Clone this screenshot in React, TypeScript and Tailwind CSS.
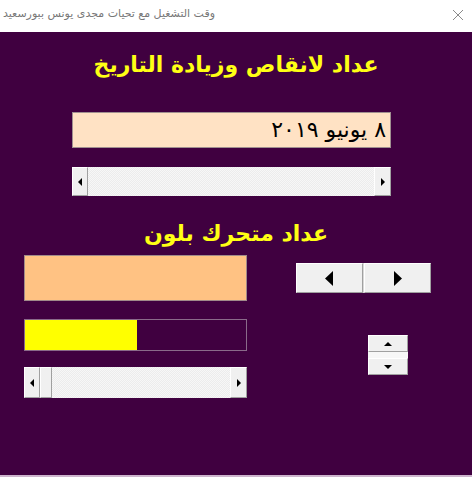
import React from "react";

const Tri = ({ dir, big }: { dir: "left" | "right" | "up" | "down"; big?: boolean }) => {
  if (big) {
    return (
      <svg width="9" height="15" viewBox="0 0 9 15">
        <polygon points={dir === "left" ? "8,0 8,15 0,7.5" : "1,0 1,15 9,7.5"} fill="#000" />
      </svg>
    );
  }
  const vertical = dir === "up" || dir === "down";
  const pts = {
    left: "5,0 5,8 1,4",
    right: "1,0 1,8 5,4",
    up: "0,5 8,5 4,1",
    down: "0,1 8,1 4,5",
  }[dir];
  return (
    <svg width={vertical ? 8 : 6} height={vertical ? 6 : 8} viewBox={vertical ? "0 0 8 6" : "0 0 6 8"}>
      <polygon points={pts} fill="#000" />
    </svg>
  );
};

const bevel = "bg-[#f0f0f0] border-t border-l border-t-[#ffffff] border-l-[#ffffff] border-b border-r border-b-[#a0a0a0] border-r-[#a0a0a0] flex items-center justify-center";

const ScrollBar = ({ className, thumb }: { className: string; thumb?: boolean }) => (
  <div className={`flex bg-[#f4f4f4] ${className}`}>
    <div className={`${bevel} w-[16px]`}>
      <Tri dir="left" />
    </div>
    {thumb && <div className={`${bevel} w-[12px]`} />}
    <div className="flex-1 bg-[repeating-conic-gradient(#f7f7f7_0_25%,#ececec_0_50%)] bg-[length:2px_2px]" />
    <div className={`${bevel} w-[17px]`}>
      <Tri dir="right" />
    </div>
  </div>
);

export default function App() {
  return (
    <div className="w-[472px] h-[477px] flex flex-col font-['DejaVu_Sans',sans-serif] overflow-hidden">
      <div className="h-[32px] bg-white flex items-center justify-between pl-[3px] pr-[8px]">
        <span dir="rtl" className="text-[11px] text-[#777777] pb-[3px]">
          وقت التشغيل مع تحيات مجدى يونس ببورسعيد
        </span>
        <svg width="12" height="12" viewBox="0 0 12 12" className="mb-[2px]">
          <path d="M1 1L11 11M11 1L1 11" stroke="#8a8a8a" strokeWidth="1" fill="none" />
        </svg>
      </div>
      <main className="flex-1 bg-[#400040] flex flex-col">
        <h1 dir="rtl" className="mt-[15px] h-[36px] text-center text-[22px] font-bold text-[#ffff14] leading-[36px]">
          عداد لانقاص وزيادة التاريخ
        </h1>
        <div className="ml-[72px] w-[319px] h-[36px] mt-[29px] bg-[#ffe2c4] border border-[#a09090] flex items-center justify-end pr-[4px]">
          <span dir="rtl" className="text-[22px] text-black leading-none">
            ٨ يونيو ٢٠١٩
          </span>
        </div>
        <ScrollBar className="ml-[72px] w-[319px] h-[29px] mt-[19px]" />
        <h2 dir="rtl" className="mt-[22px] h-[32px] text-center text-[22px] font-bold text-[#ffff14] leading-[32px]">
          عداد متحرك بلون
        </h2>
        <div className="flex mt-[5px]">
          <div className="ml-[24px] w-[223px] flex flex-col">
            <div className="h-[46px] bg-[#ffc283] border border-[#a08a8a]" />
            <div className="mt-[18px] h-[32px] border border-[#8a6a8a] flex">
              <div className="w-[112px] bg-[#ffff00]" />
            </div>
            <ScrollBar thumb className="mt-[16px] h-[31px]" />
          </div>
          <div className="ml-[49px] flex flex-col">
            <div className="mt-[8px] h-[30px] w-[135px] flex gap-[1px] bg-[#d8d8d8]">
              <div className={`${bevel} flex-1`}>
                <Tri dir="left" big />
              </div>
              <div className={`${bevel} flex-1`}>
                <Tri dir="right" big />
              </div>
            </div>
            <div className="ml-[72px] mt-[42px] w-[40px] flex flex-col bg-[#f7f7f7]">
              <div className={`${bevel} h-[17px]`}>
                <Tri dir="up" />
              </div>
              <div className="h-[6px]" />
              <div className={`${bevel} h-[17px]`}>
                <Tri dir="down" />
              </div>
            </div>
          </div>
        </div>
        <div className="flex-1" />
        <div className="h-[2px] bg-[#cdb4cd]" />
      </main>
    </div>
  );
}
